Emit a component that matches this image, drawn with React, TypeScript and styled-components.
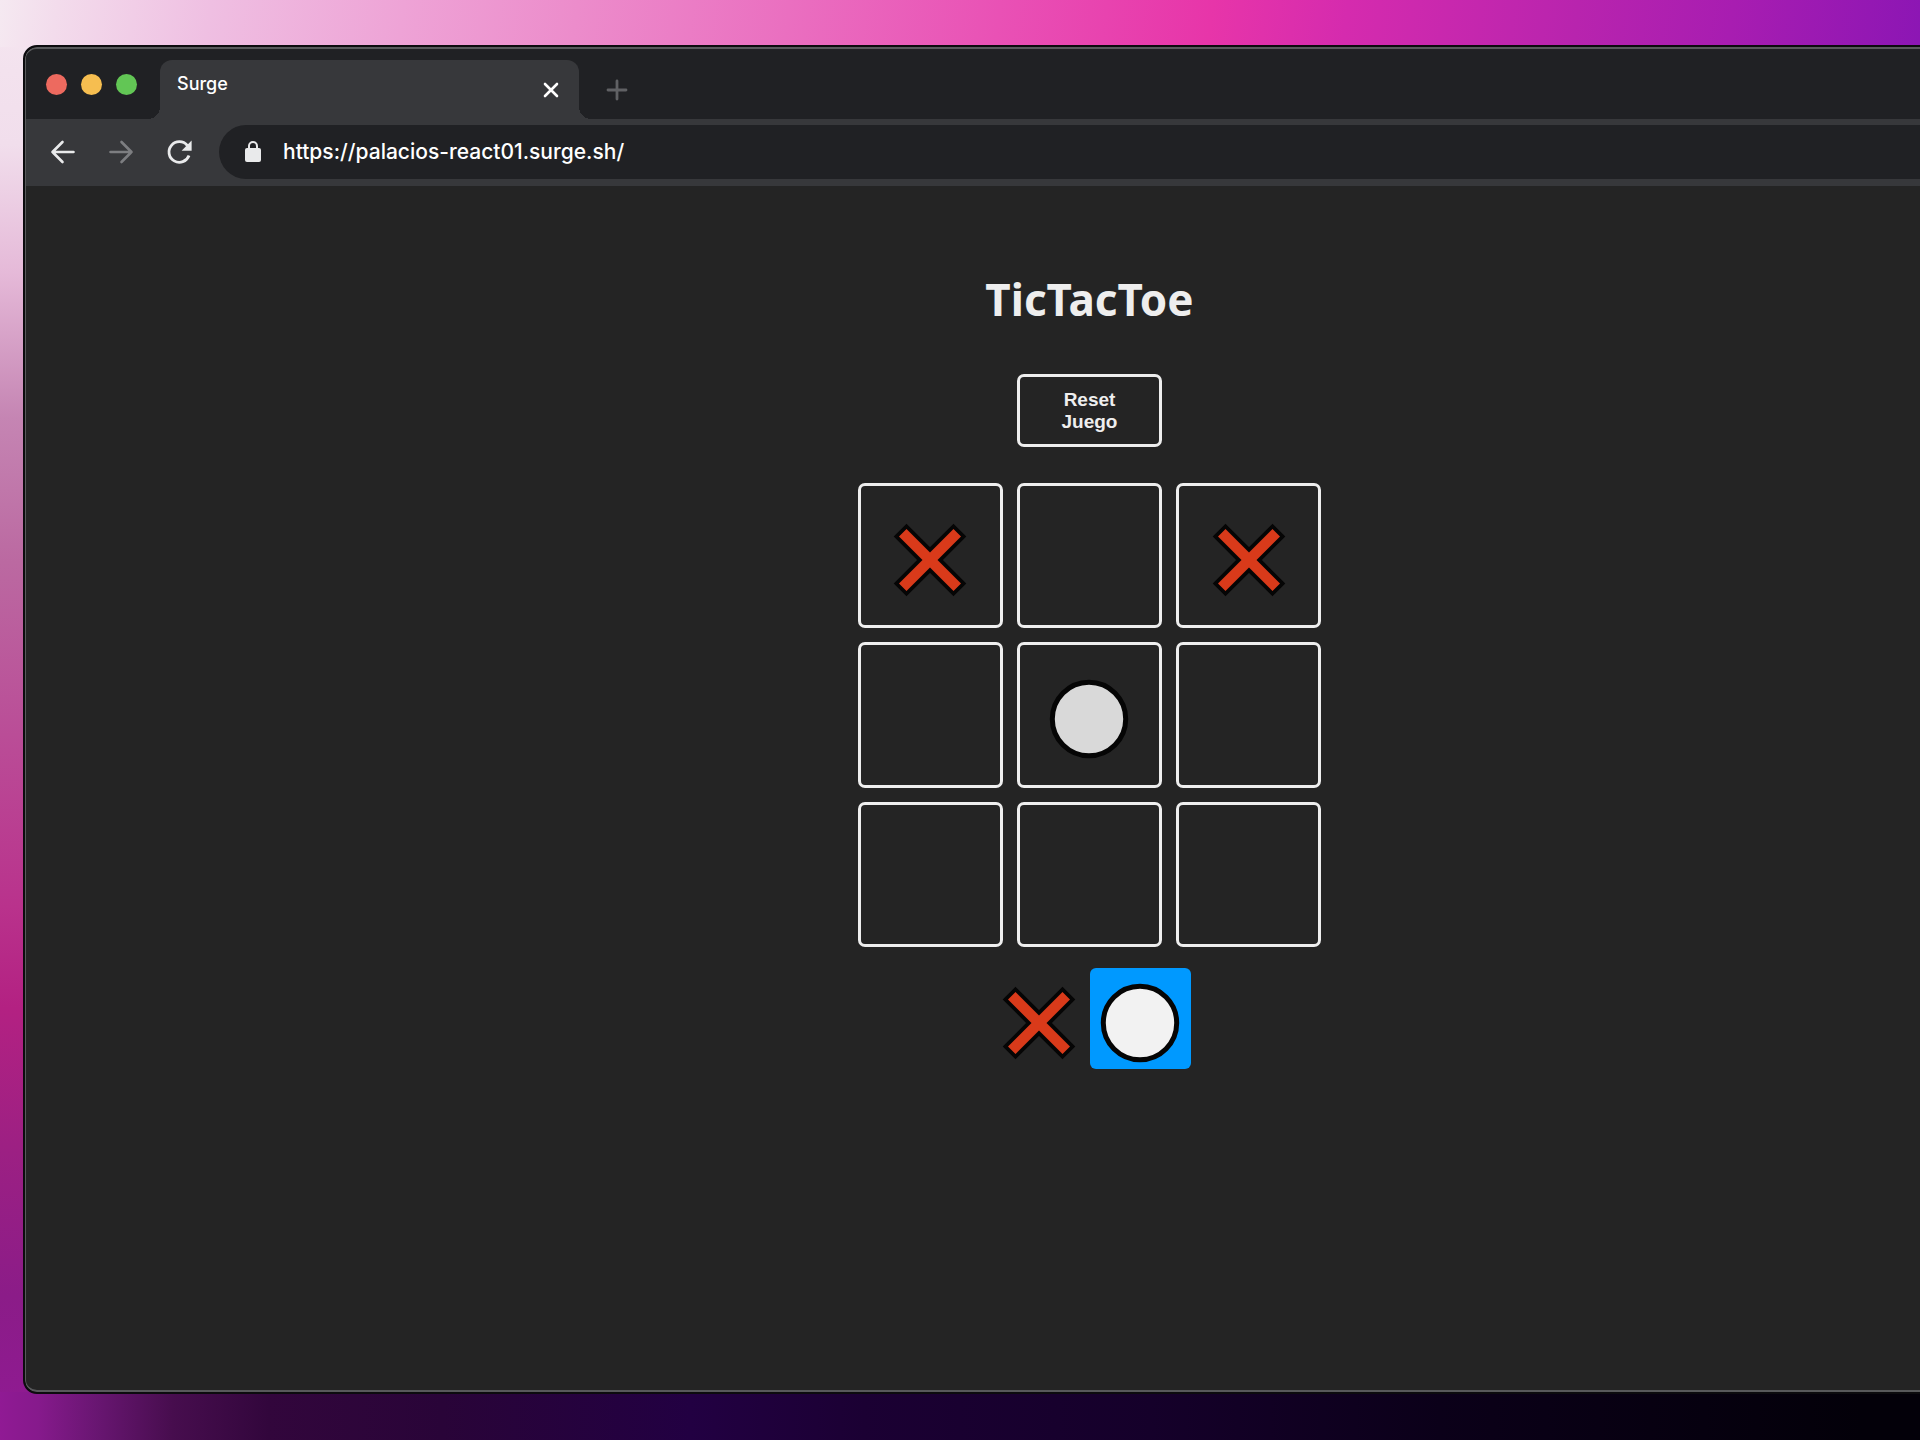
import React, { useState } from "react";
import styled, { createGlobalStyle, css } from "styled-components";

type Mark = "x" | "o";
type Square = Mark | null;

const GlobalStyle = createGlobalStyle`
  *, *::before, *::after { box-sizing: border-box; }
  body { margin: 0; background: #12001f; }
  button { padding: 0; border: 0; background: none; font: inherit; color: inherit; cursor: pointer; }
`;

const Desktop = styled.div`
  display: flex;
  min-height: 100vh;
  padding: 45px 0 46px 23px;
  overflow: hidden;
  background:
    linear-gradient(98deg, #f5e9f1 0%, #f3dcec 3%, #efbfe2 11%, #eea3d6 21%, #ec8ccb 30%, #ea6fc0 41%, #e951b5 52%, #e735a9 63%, #d52bae 70%, #b824ae 82%, #a81db1 90%, #8c16b4 100%) top left / 100% 47px no-repeat,
    linear-gradient(90deg, #901a94 0%, #861a8c 2%, #691672 5%, #470d4e 9%, #32063c 14%, #290438 23%, #220042 36%, #1b0033 45%, #15002a 60%, #0b0019 75%, #030009 97%) bottom left / 100% 48px no-repeat,
    linear-gradient(180deg, #f5e6f0 0%, #f1deec 10%, #e5b9d8 19%, #c585b3 29%, #bb69a1 39%, #ba4d97 51%, #b9328c 63%, #b32182 70%, #9c2083 80%, #8b1c88 90%, #901a94 100%) top left / 40px 100% no-repeat,
    #12001f;
`;

const WindowFrame = styled.div`
  flex: none;
  display: flex;
  width: calc(100% + 236px);
  border: 2px solid #0c0b0e;
  border-radius: 14px;
  overflow: hidden;
  background: #0c0b0e;
`;

const WindowBody = styled.div`
  flex: 1;
  display: flex;
  flex-direction: column;
  border: solid #58595b;
  border-width: 2px 1px;
  border-radius: 12px;
  overflow: hidden;
  background: #242424;
`;

const TabStrip = styled.header`
  display: flex;
  height: 70px;
  padding-left: 20px;
  background: #202124;
`;

const WindowControls = styled.div`
  display: flex;
  align-items: center;
  gap: 14px;
  margin-right: 23px;
`;

const WindowControl = styled.button<{ $color: string }>`
  width: 21px;
  height: 21px;
  border-radius: 50%;
  background: ${({ $color }) => $color};
`;

const Tab = styled.div`
  position: relative;
  display: flex;
  align-items: center;
  justify-content: space-between;
  width: 419px;
  height: 59px;
  margin-top: 11px;
  padding: 0 14px 0 17px;
  border-radius: 12px 12px 0 0;
  background: #37383b;

  &::before,
  &::after {
    content: "";
    position: absolute;
    bottom: 0;
    width: 12px;
    height: 12px;
  }
  &::before {
    right: 100%;
    background: radial-gradient(circle at 0 0, #202124 12px, #37383b 12px);
  }
  &::after {
    left: 100%;
    background: radial-gradient(circle at 100% 0, #202124 12px, #37383b 12px);
  }
`;

const TabTitle = styled.span`
  align-self: flex-start;
  margin-top: 12px;
  font: 500 18px/24px Inter, sans-serif;
  color: #fff;
`;

const IconButton = styled.button<{ $color?: string; $size?: number }>`
  display: grid;
  place-items: center;
  flex: none;
  width: ${({ $size = 28 }) => $size}px;
  height: ${({ $size = 28 }) => $size}px;
  color: ${({ $color = "#e9eaeb" }) => $color};
`;

const NewTabSlot = styled.div`
  display: flex;
  align-items: center;
  margin: 11px 0 0 24px;
`;

const Toolbar = styled.div`
  display: flex;
  align-items: center;
  gap: 22px;
  height: 67px;
  padding: 0 0 1px 19px;
  background: #37383b;
`;

const AddressBar = styled.label`
  flex: 1;
  display: flex;
  align-items: center;
  gap: 22px;
  height: 54px;
  padding: 0 0 1px 26px;
  border-radius: 27px 0 0 27px;
  background: #202124;
  color: #e9eaeb;
`;

const AddressInput = styled.input`
  flex: 1;
  padding: 0;
  border: 0;
  outline: 0;
  background: none;
  color: #fff;
  font: 500 21px/28px Inter, sans-serif;
`;

const Page = styled.main`
  flex: 1;
  display: flex;
  flex-direction: column;
  align-items: center;
  padding-top: 85px;
  color: #eee;
`;

const Title = styled.h1`
  margin: 0 0 47px;
  font: 700 44px/56px "Noto Sans", sans-serif;
`;

const outlined = css`
  border: 3px solid #eee;
  border-radius: 7px;
`;

const ResetButton = styled.button`
  ${outlined}
  width: 145px;
  margin-bottom: 36px;
  padding: 12px 30px 11px;
  font: 700 19px/22px "Liberation Sans", Arial, sans-serif;
`;

const Board = styled.section`
  display: grid;
  grid-template-columns: repeat(3, 1fr);
  gap: 14px;
  width: 464px;
`;

const Cell = styled.button`
  ${outlined}
  display: grid;
  place-items: center;
  aspect-ratio: 1;
  padding-top: 9px;
`;

const Turns = styled.section`
  display: flex;
  margin-top: 21px;
`;

const Turn = styled.div<{ $active: boolean }>`
  display: grid;
  place-items: center;
  width: 101px;
  height: 101px;
  padding-top: 9px;
  border-radius: 6px;
  background: ${({ $active }) => ($active ? "#09f" : "transparent")};
`;

const Glyph = ({ mark, fill }: { mark: Mark; fill: string }) => (
  <svg width="80" height="80" viewBox="-40 -40 80 80" aria-hidden="true">
    {mark === "x" ? (
      <path
        d="M0-7.5 23.5-31 31-23.5 7.5 0 31 23.5 23.5 31 0 7.5-23.5 31-31 23.5-7.5 0-31-23.5-23.5-31Z"
        fill="#d93a1a"
        stroke="#050505"
        strokeWidth="7.5"
        paintOrder="stroke"
      />
    ) : (
      <circle r="36.7" fill={fill} stroke="#050505" strokeWidth="5" />
    )}
  </svg>
);

const ArrowIcon = ({ flip }: { flip?: boolean }) => (
  <svg width="26" height="26" viewBox="0 0 26 26" fill="none" stroke="currentColor" strokeWidth="2.6" strokeLinecap="round" strokeLinejoin="round">
    <path d={flip ? "M2.5 13h21M13.5 3l10 10-10 10" : "M23.5 13h-21M12.5 3l-10 10 10 10"} />
  </svg>
);

const ReloadIcon = () => (
  <svg width="26" height="26" viewBox="0 0 26 26">
    <path d="M21.3 6.5A10.3 10.3 0 1 0 23 16.5" fill="none" stroke="currentColor" strokeWidth="2.8" />
    <path d="M25.6 1.6v10.2H15.6Z" fill="currentColor" />
  </svg>
);

const LockIcon = () => (
  <svg width="16" height="21" viewBox="0 0 16 21">
    <path d="M4 8V5a4 4 0 0 1 8 0v3" fill="none" stroke="currentColor" strokeWidth="2" />
    <rect y="7" width="16" height="14" rx="2" fill="currentColor" />
  </svg>
);

const CrossIcon = () => (
  <svg width="16" height="16" viewBox="0 0 16 16" stroke="currentColor" strokeWidth="2.6" strokeLinecap="round">
    <path d="M2 2l12 12M14 2 2 14" />
  </svg>
);

const PlusIcon = () => (
  <svg width="22" height="22" viewBox="0 0 22 22" stroke="currentColor" strokeWidth="2.8" strokeLinecap="round">
    <path d="M11 2v18M2 11h18" />
  </svg>
);

const controls = [
  { label: "Close window", color: "#ed6a5f" },
  { label: "Minimize window", color: "#f6be50" },
  { label: "Zoom window", color: "#62c655" },
];

const opening: Square[] = ["x", null, "x", null, "o", null, null, null, null];

export default function App() {
  const [board, setBoard] = useState<Square[]>(opening);
  const [turn, setTurn] = useState<Mark>("o");
  const [url, setUrl] = useState("https://palacios-react01.surge.sh/");

  const play = (index: number) => {
    if (board[index]) return;
    setBoard(board.map((square, i) => (i === index ? turn : square)));
    setTurn(turn === "x" ? "o" : "x");
  };

  const reset = () => {
    setBoard(Array(9).fill(null));
    setTurn("x");
  };

  return (
    <>
      <GlobalStyle />
      <Desktop>
        <WindowFrame>
          <WindowBody>
            <TabStrip>
              <WindowControls>
                {controls.map(({ label, color }) => (
                  <WindowControl key={label} aria-label={label} $color={color} />
                ))}
              </WindowControls>
              <Tab>
                <TabTitle>Surge</TabTitle>
                <IconButton aria-label="Close tab" $color="#fff"><CrossIcon /></IconButton>
              </Tab>
              <NewTabSlot>
                <IconButton aria-label="New tab" $color="#606164"><PlusIcon /></IconButton>
              </NewTabSlot>
            </TabStrip>
            <Toolbar>
              <IconButton aria-label="Back" $size={36}><ArrowIcon /></IconButton>
              <IconButton aria-label="Forward" $size={36} $color="#7d7e81"><ArrowIcon flip /></IconButton>
              <IconButton aria-label="Reload" $size={36}><ReloadIcon /></IconButton>
              <AddressBar>
                <LockIcon />
                <AddressInput aria-label="Address" value={url} onChange={(e) => setUrl(e.target.value)} />
              </AddressBar>
            </Toolbar>
            <Page>
              <Title>TicTacToe</Title>
              <ResetButton onClick={reset}>Reset Juego</ResetButton>
              <Board aria-label="Board">
                {board.map((square, i) => (
                  <Cell key={i} aria-label={`Square ${i + 1}`} onClick={() => play(i)}>
                    {square && <Glyph mark={square} fill="#d9d9d9" />}
                  </Cell>
                ))}
              </Board>
              <Turns aria-label="Turn">
                <Turn $active={turn === "x"}><Glyph mark="x" fill="#f2f2f2" /></Turn>
                <Turn $active={turn === "o"}><Glyph mark="o" fill="#f2f2f2" /></Turn>
              </Turns>
            </Page>
          </WindowBody>
        </WindowFrame>
      </Desktop>
    </>
  );
}
